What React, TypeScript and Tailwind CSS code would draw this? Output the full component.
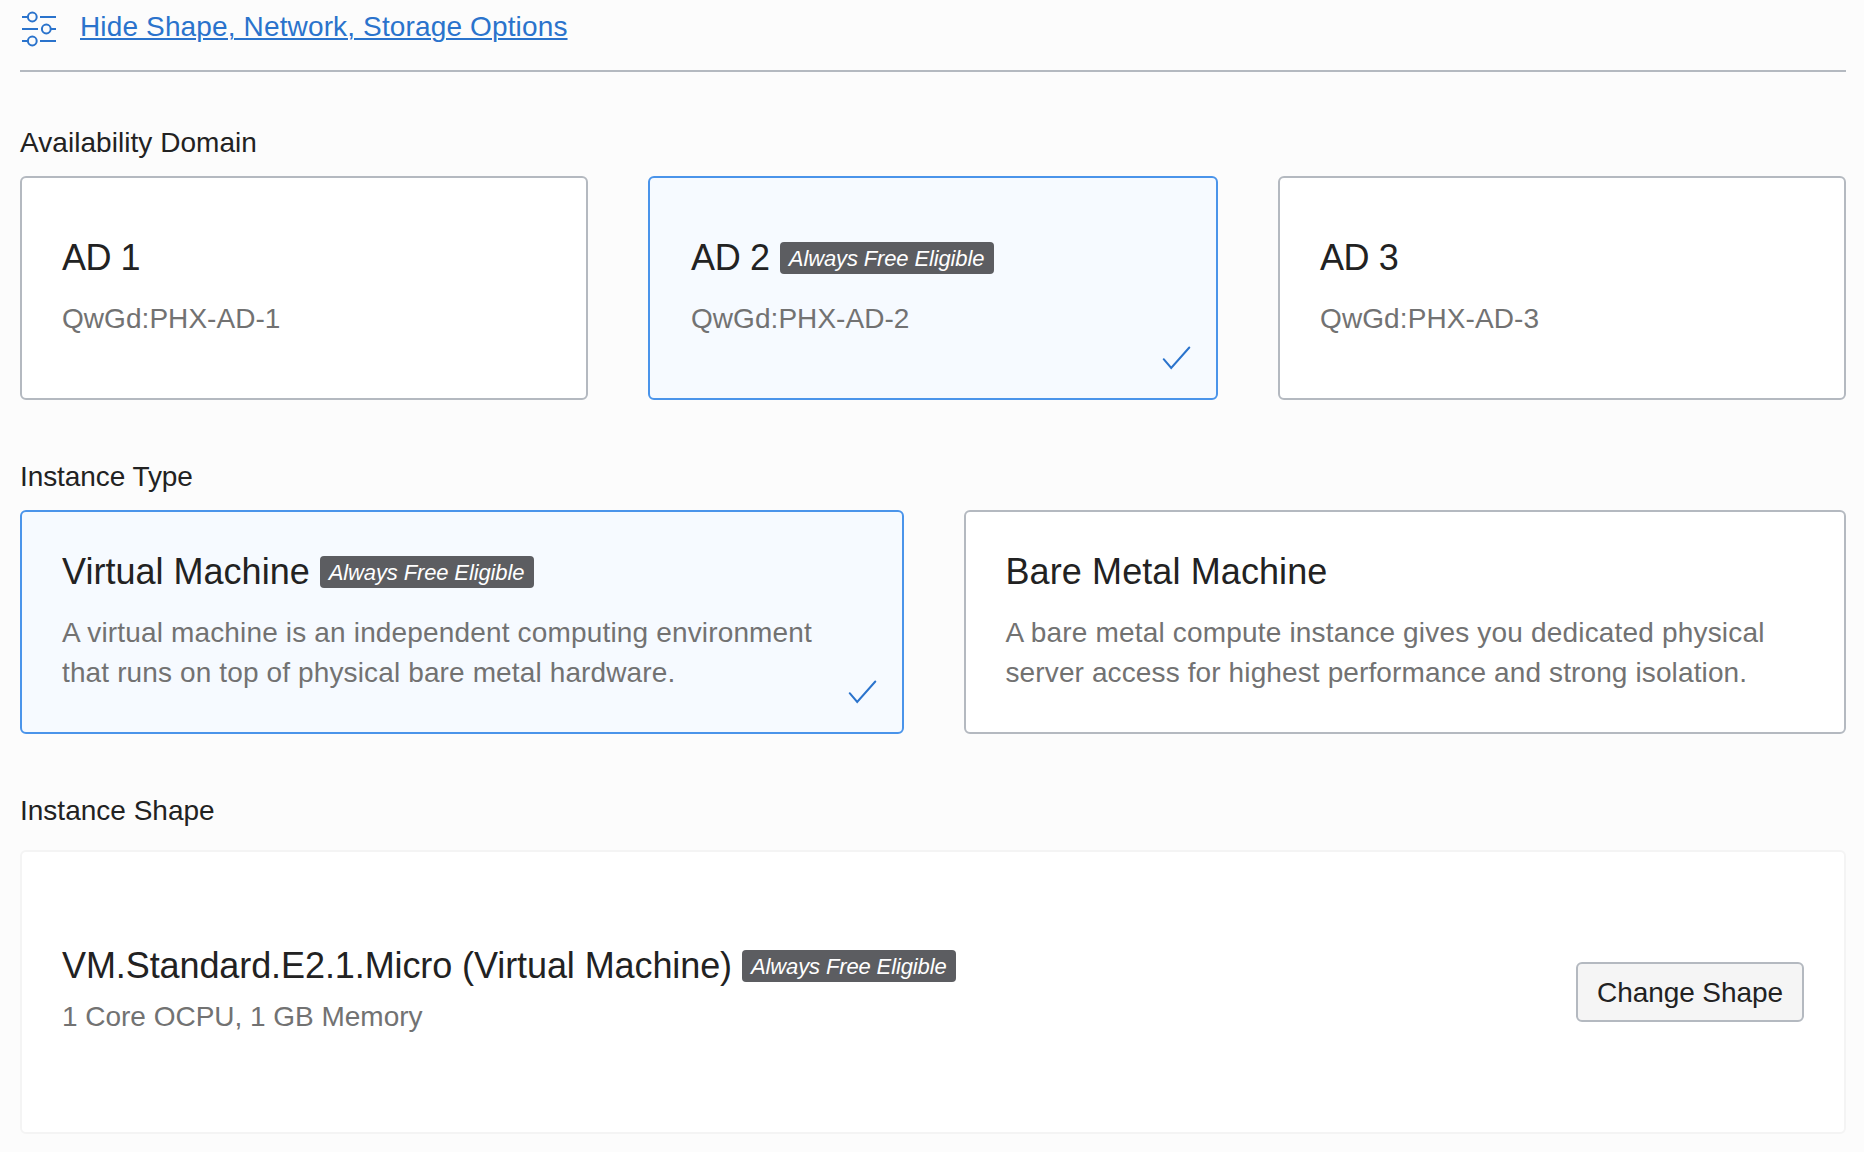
import type { ReactNode } from "react";

function SlidersIcon() {
  return (
    <svg width="36" height="36" viewBox="0 0 36 36" fill="none" stroke="#2a73cc" strokeWidth="2">
      <path d="M2 6h5M20 6h16M2 18h16M31 18h5M2 30h5M20 30h16" />
      <circle cx="12.3" cy="6" r="4.4" />
      <circle cx="26.3" cy="18" r="4.4" />
      <circle cx="12.3" cy="30" r="4.4" />
    </svg>
  );
}

function CheckIcon() {
  return (
    <svg
      className="absolute right-[25px] bottom-[26px] text-[#2a73cc]"
      width="30"
      height="26"
      viewBox="0 0 30 26"
      fill="none"
      stroke="currentColor"
      strokeWidth="2"
      strokeLinecap="round"
    >
      <path d="M2.7 13.2L10.2 21.9L28.3 1.5" />
    </svg>
  );
}

function FreeBadge() {
  return (
    <span className="ml-2.5 h-8 w-[214px] rounded bg-[#5c5d61] pt-px pl-[9px] text-[22px] leading-8 tracking-[-0.13px] whitespace-nowrap text-white italic">
      Always Free Eligible
    </span>
  );
}

function Label({ children, className = "" }: { children: ReactNode; className?: string }) {
  return <h2 className={`text-[28px] leading-10 ${className}`}>{children}</h2>;
}

type CardProps = {
  title: string;
  titleClass?: string;
  lines: { text: string; className: string }[];
  selected?: boolean;
  className?: string;
};

function OptionCard({ title, titleClass = "", lines, selected = false, className = "pl-10" }: CardProps) {
  return (
    <div
      className={`relative flex h-56 flex-col justify-center rounded-md border-2 pb-px ${className} ${
        selected ? "border-[#4a94ea] bg-[#f6faff]" : "border-[#b4b9c0] bg-white"
      }`}
    >
      <div className="flex h-11 items-center">
        <h3 className={`text-4xl leading-11 whitespace-nowrap ${titleClass}`}>{title}</h3>
        {selected && <FreeBadge />}
      </div>
      <p className="mt-[19px] text-[28px] leading-10 text-[#727272]">
        {lines.map((line) => (
          <span key={line.text} className={`block whitespace-nowrap ${line.className}`}>
            {line.text}
          </span>
        ))}
      </p>
      {selected && <CheckIcon />}
    </div>
  );
}

export default function App() {
  return (
    <main className="h-[1152px] w-[1864px] overflow-hidden bg-[#fcfcfc] pr-[18px] pl-5 font-['Liberation_Sans',Arial,sans-serif] text-[#222222]">
      <header className="flex h-[72px] items-start border-b-2 border-[#b4b9c0]">
        <div className="mt-[11px]">
          <SlidersIcon />
        </div>
        <a
          href="#"
          className="mt-[7px] ml-6 text-[28px] leading-10 tracking-[0.14px] whitespace-nowrap text-[#2a73cc] underline decoration-2 underline-offset-[2px]"
        >
          Hide Shape, Network, Storage Options
        </a>
      </header>

      <section className="pt-[51px]">
        <Label className="tracking-[0.05px]">Availability Domain</Label>
        <div className="mt-[13px] grid grid-cols-[568fr_570fr_568fr] gap-[60px]">
          <OptionCard
            title="AD 1"
            titleClass="tracking-[-0.5px]"
            lines={[{ text: "QwGd:PHX-AD-1", className: "tracking-[0.05px]" }]}
          />
          <OptionCard
            title="AD 2"
            titleClass="tracking-[-0.3px]"
            lines={[{ text: "QwGd:PHX-AD-2", className: "tracking-[0.05px]" }]}
            selected
            className="pl-[41px]"
          />
          <OptionCard
            title="AD 3"
            titleClass="tracking-[-0.4px]"
            lines={[{ text: "QwGd:PHX-AD-3", className: "tracking-[0.1px]" }]}
          />
        </div>
      </section>

      <section className="pt-[57px]">
        <Label className="tracking-[-0.08px]">Instance Type</Label>
        <div className="mt-[13px] grid grid-cols-[884fr_882fr] gap-[60px]">
          <OptionCard
            title="Virtual Machine"
            titleClass="tracking-[0.02px]"
            lines={[
              { text: "A virtual machine is an independent computing environment", className: "tracking-[0.16px]" },
              { text: "that runs on top of physical bare metal hardware.", className: "tracking-[0.13px]" },
            ]}
            selected
          />
          <OptionCard
            title="Bare Metal Machine"
            titleClass="tracking-[0.1px]"
            lines={[
              { text: "A bare metal compute instance gives you dedicated physical", className: "tracking-[0.18px]" },
              { text: "server access for highest performance and strong isolation.", className: "tracking-[0.12px]" },
            ]}
            className="pl-[39.5px]"
          />
        </div>
      </section>

      <section className="pt-[57px]">
        <Label>Instance Shape</Label>
        <div className="mt-[19px] flex h-[284px] items-center justify-between rounded-md border-2 border-[#f4f4f4] bg-white px-10">
          <div className="pb-[3px]">
            <div className="flex h-11 items-center">
              <h3 className="text-4xl leading-11 tracking-[-0.09px] whitespace-nowrap">
                VM.Standard.E2.1.Micro (Virtual Machine)
              </h3>
              <FreeBadge />
            </div>
            <p className="mt-[9px] text-[28px] leading-10 tracking-[-0.02px] text-[#727272]">
              1 Core OCPU, 1 GB Memory
            </p>
          </div>
          <button
            type="button"
            className="flex h-[60px] w-[228px] items-center justify-center rounded-md border-2 border-[#b4b9c0] bg-[#f5f5f5] pt-0.5 text-[28px] leading-10 tracking-[-0.07px] whitespace-nowrap"
          >
            Change Shape
          </button>
        </div>
      </section>
    </main>
  );
}
